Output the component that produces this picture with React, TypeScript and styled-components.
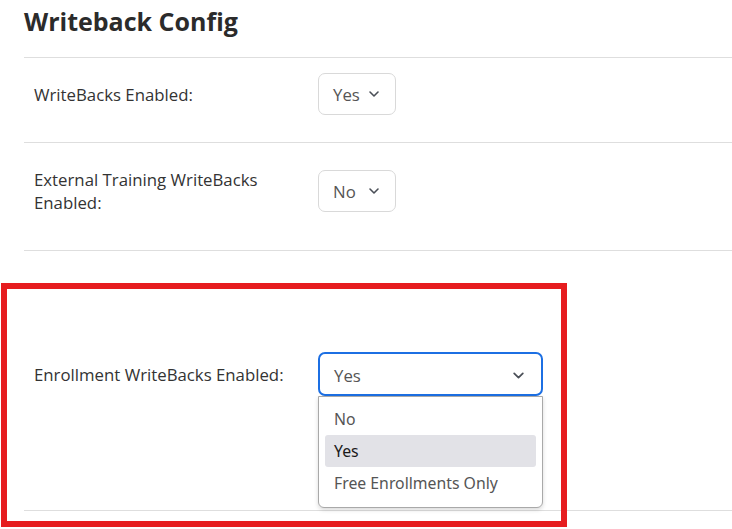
import styled, { createGlobalStyle } from 'styled-components'

const GlobalStyle = createGlobalStyle`
  body {
    margin: 0;
    background: #ffffff;
    font-family: 'Open Sans', 'Noto Sans', sans-serif;
    color: #333333;
  }
`

const Chevron = ({ size = 12 }: { size?: number }) => (
  <svg width={size} height={size} viewBox="0 0 12 12" fill="none">
    <path d="M2 4 L6 8 L10 4" stroke="#4a4f57" strokeWidth="1.6" strokeLinecap="round" strokeLinejoin="round" />
  </svg>
)

const options = ['No', 'Yes', 'Free Enrollments Only']

const App = () => {
  return (
    <Page>
      <GlobalStyle />
      <Title>Writeback Config</Title>

      <Row $top={15} $height={85}>
        <Label>WriteBacks Enabled:</Label>
        <SelectBox>
          Yes
          <Chevron />
        </SelectBox>
      </Row>

      <Row $top={25} $height={108}>
        <Label>External Training WriteBacks Enabled:</Label>
        <SelectBox>
          No
          <Chevron />
        </SelectBox>
      </Row>

      <Row $top={101} $height={260}>
        <Label>Enrollment WriteBacks Enabled:</Label>
        <SelectWrap>
          <OpenSelect>
            Yes
            <Chevron size={13} />
          </OpenSelect>
          <Menu>
            {options.map((opt) => (
              <MenuItem key={opt} $active={opt === 'Yes'}>
                {opt}
              </MenuItem>
            ))}
          </Menu>
        </SelectWrap>
      </Row>
      <Divider />

      <Highlight />
    </Page>
  )
}

const Page = styled.div`
  position: relative;
  width: 732px;
  height: 529px;
  padding-left: 24px;
  box-sizing: border-box;
  overflow: hidden;
`

const Title = styled.h1`
  margin: 0;
  padding-top: 4px;
  height: 57px;
  box-sizing: border-box;
  font-size: 25px;
  line-height: 34px;
  font-weight: 700;
  color: #2b2b2b;
`

const Row = styled.div<{ $top: number; $height: number }>`
  display: flex;
  align-items: center;
  align-content: flex-start;
  flex-wrap: wrap;
  gap: 14px;
  height: ${(p) => p.$height}px;
  box-sizing: border-box;
  padding: ${(p) => p.$top}px 0 0 10px;
  border-top: 1px solid #dedede;
`

const Label = styled.div`
  flex: 0 0 270px;
  font-size: 16.8px;
  line-height: 23px;
  color: #333333;
`

const SelectBox = styled.div`
  display: flex;
  align-items: center;
  justify-content: space-between;
  width: 78px;
  height: 42px;
  box-sizing: border-box;
  padding: 0 15px 0 14px;
  border: 1px solid #d9d9d9;
  border-radius: 7px;
  font-size: 16.8px;
  color: #555555;
`

const SelectWrap = styled.div`
  position: relative;
  width: 225px;
`

const OpenSelect = styled.div`
  display: flex;
  align-items: center;
  justify-content: space-between;
  height: 44px;
  box-sizing: border-box;
  padding: 2px 16px 0 14px;
  border: 2px solid #1c6fe3;
  border-radius: 7px;
  font-size: 16.8px;
  color: #555555;
`

const Menu = styled.div`
  position: absolute;
  top: 44px;
  left: 0;
  width: 225px;
  box-sizing: border-box;
  padding: 6px 6px 8px;
  background: #ffffff;
  border: 1px solid #a9a9a9;
  border-radius: 0 0 6px 6px;
  box-shadow: 0 2px 4px rgba(0, 0, 0, 0.15);
  z-index: 2;
`

const MenuItem = styled.div<{ $active?: boolean }>`
  height: 32px;
  line-height: 32px;
  padding-left: 9px;
  border-radius: 3px;
  font-family: 'Noto Sans', 'Open Sans', sans-serif;
  font-size: 15.8px;
  color: ${(p) => (p.$active ? '#1a1a1a' : '#555555')};
  background: ${(p) => (p.$active ? '#e2e2e7' : 'transparent')};
`

const Divider = styled.div`
  border-top: 1px solid #dedede;
`

const Highlight = styled.div`
  position: absolute;
  left: 1px;
  top: 283px;
  width: 566px;
  height: 244px;
  box-sizing: border-box;
  border: 6px solid #e61d1f;
  pointer-events: none;
  z-index: 3;
`

export default App
